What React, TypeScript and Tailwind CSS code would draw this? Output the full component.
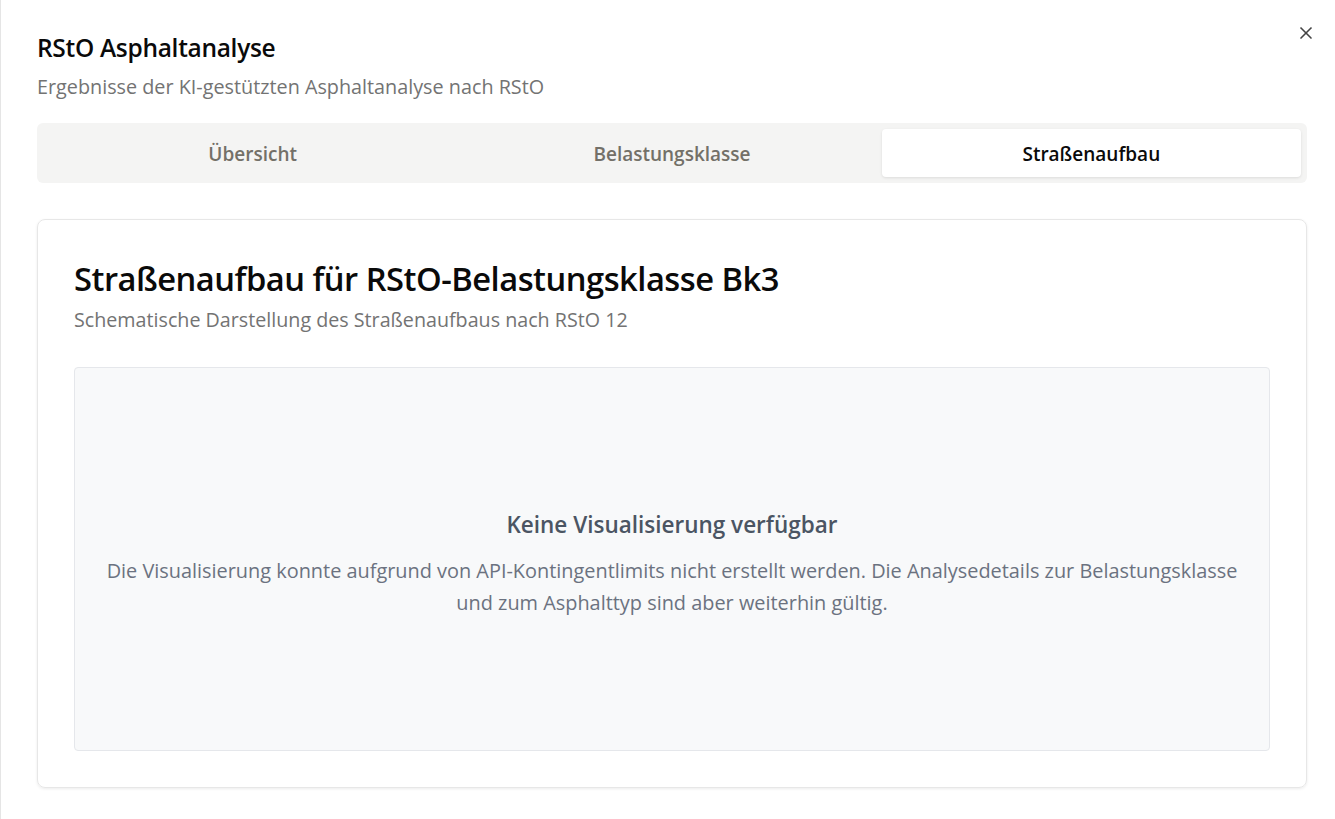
import React from "react";

export default function App() {
  const tabs = ["Übersicht", "Belastungsklasse", "Straßenaufbau"];
  return (
    <div
      className="w-[1335px] h-[819px] bg-white overflow-hidden border-l border-[#e5e5e5] relative"
      style={{ fontFamily: '"Open Sans", "Noto Sans", sans-serif' }}
    >
      <button className="absolute right-[19px] top-[23px] text-[#444444]" aria-label="Close">
        <svg width="20" height="20" viewBox="0 0 24 24" fill="none" stroke="currentColor" strokeWidth="2" strokeLinecap="round">
          <path d="M18 6 6 18" />
          <path d="m6 6 12 12" />
        </svg>
      </button>
      <div className="pl-[36px] pr-[28px] pt-[31px]">
        <h2 className="text-[24.5px] leading-[34px] font-semibold text-[#0a0a0a] tracking-[-0.3px]">RStO Asphaltanalyse</h2>
        <p className="mt-[8px] text-[19.8px] leading-[28px] text-[#737373]">Ergebnisse der KI-gestützten Asphaltanalyse nach RStO</p>

        <div className="mt-[22px] h-[60px] bg-[#f4f4f3] rounded-[6px] p-[6px] grid grid-cols-3">
          {tabs.map((t, i) => (
            <div
              key={t}
              className={
                i === 2
                  ? "flex items-center justify-center pt-[3px] bg-white rounded-[4px] shadow-[0_1px_3px_rgba(0,0,0,0.1)] text-[19px] font-semibold text-[#0a0a0a]"
                  : "flex items-center justify-center pt-[3px] text-[19px] font-semibold text-[#737068]"
              }
            >
              {t}
            </div>
          ))}
        </div>

        <div className="mt-[36px] h-[569px] border border-[#e7e7e7] rounded-[8px] shadow-[0_1px_3px_rgba(0,0,0,0.08)] px-[36px] pt-[36px]">
          <h3 className="text-[32.7px] leading-[46px] font-semibold text-[#0a0a0a] tracking-[-0.5px]">
            Straßenaufbau für RStO-Belastungsklasse Bk3
          </h3>
          <p className="mt-[4px] text-[19.7px] leading-[28px] text-[#737373]">
            Schematische Darstellung des Straßenaufbaus nach RStO 12
          </p>
          <div className="mt-[33px] h-[384px] bg-[#f8f9fa] border border-[#e5e7eb] rounded-[4px] flex flex-col items-center justify-center text-center px-[30px] pt-[10px]">
            <div className="text-[22.5px] leading-[30px] font-semibold text-[#4b5563]">Keine Visualisierung verfügbar</div>
            <p className="mt-[15px] text-[19.9px] leading-[32px] text-[#6b7280] max-w-[1140px]">
              Die Visualisierung konnte aufgrund von API-Kontingentlimits nicht erstellt werden. Die Analysedetails zur Belastungsklasse und zum Asphalttyp sind aber weiterhin gültig.
            </p>
          </div>
        </div>
      </div>
    </div>
  );
}
